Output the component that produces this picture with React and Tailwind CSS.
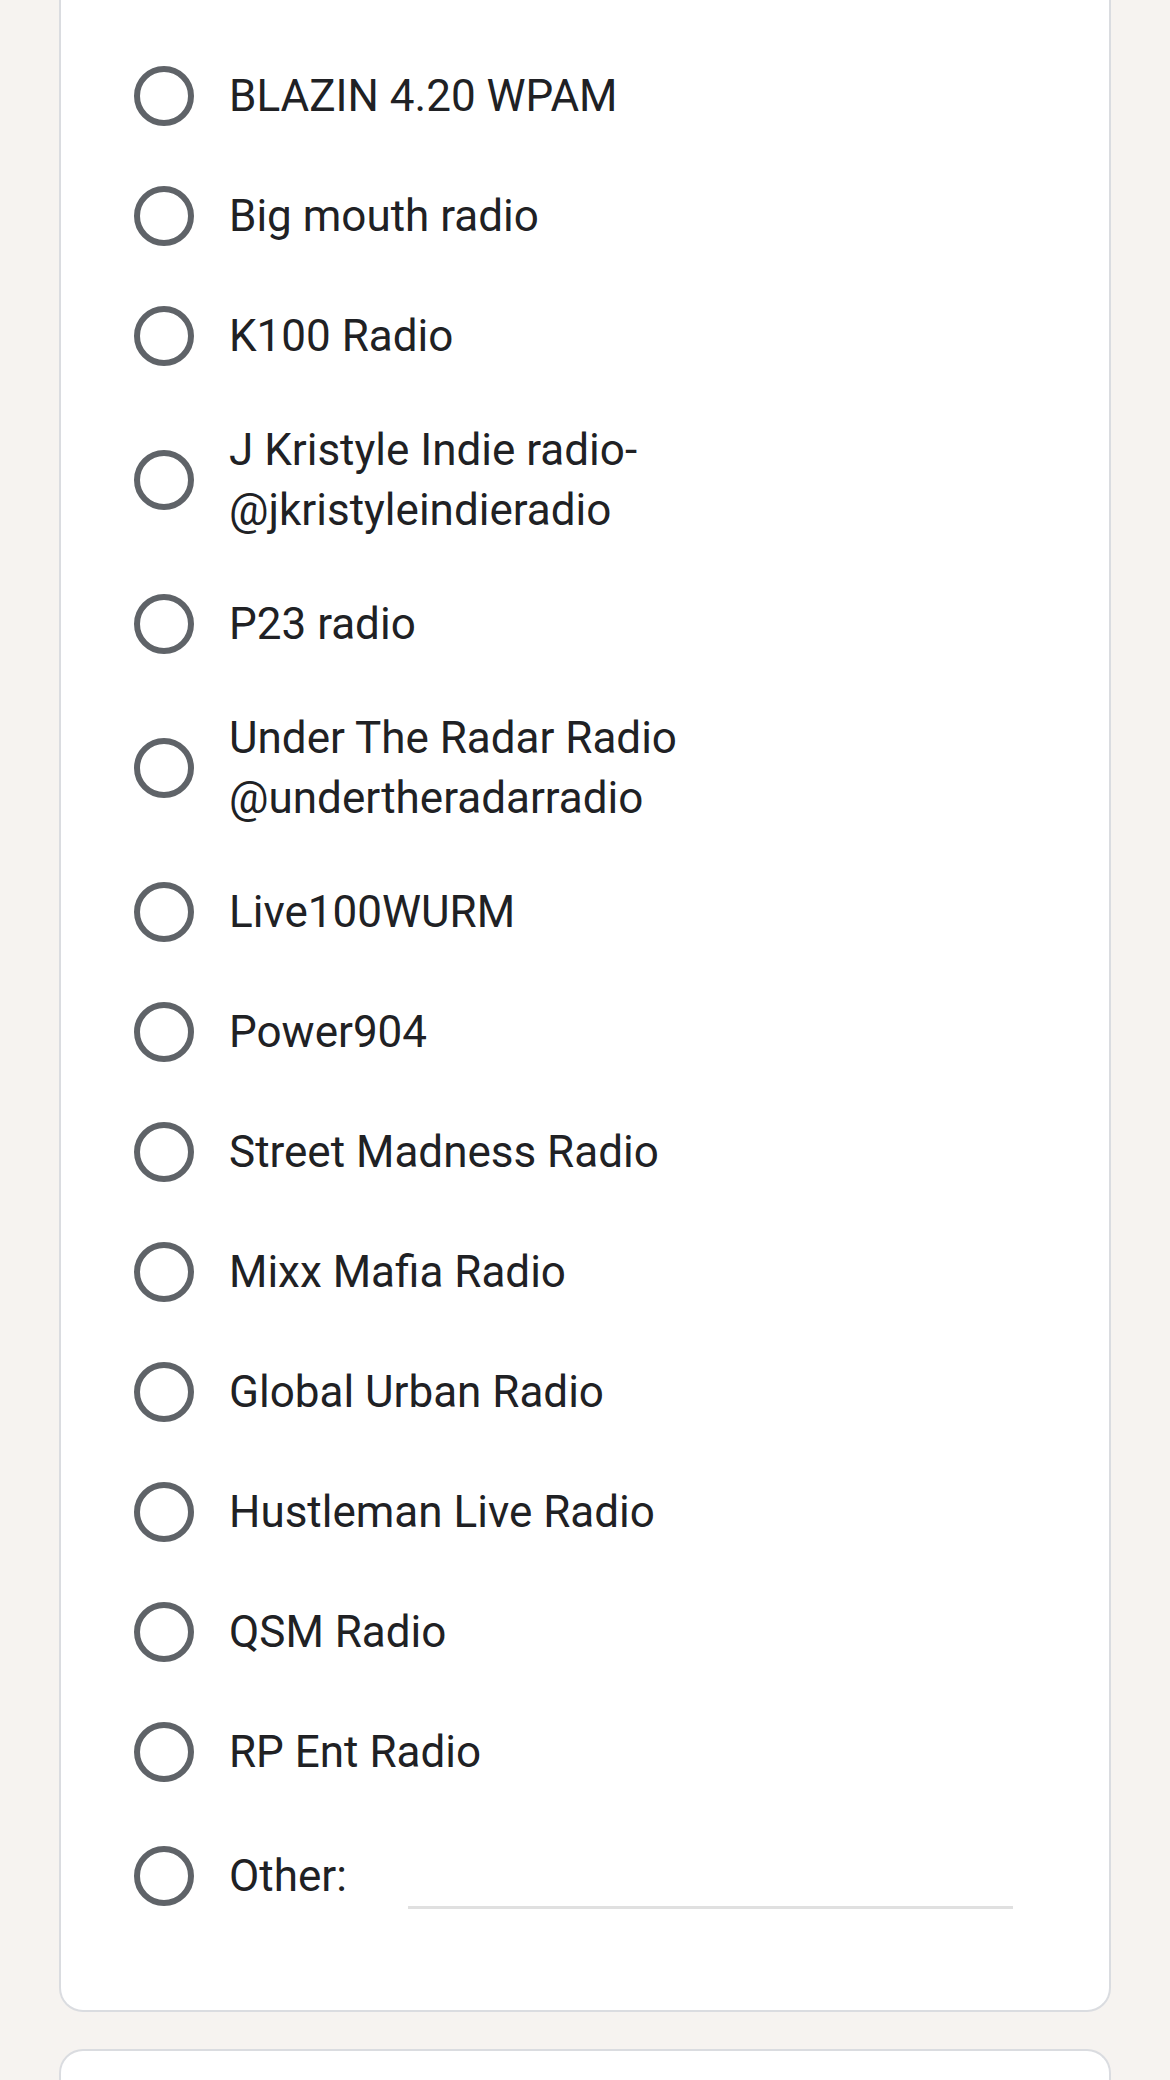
import React from 'react';

const options = [
  ['BLAZIN 4.20 WPAM'],
  ['Big mouth radio'],
  ['K100 Radio'],
  ['J Kristyle Indie radio-', '@jkristyleindieradio'],
  ['P23 radio'],
  ['Under The Radar Radio', '@undertheradarradio'],
  ['Live100WURM'],
  ['Power904'],
  ['Street Madness Radio'],
  ['Mixx Mafia Radio'],
  ['Global Urban Radio'],
  ['Hustleman Live Radio'],
  ['QSM Radio'],
  ['RP Ent Radio'],
];

function Radio() {
  return (
    <div className="flex h-[120px] w-[60px] shrink-0 items-center justify-center">
      <div className="h-[60px] w-[60px] rounded-full border-[6px] border-[#5f6368]" />
    </div>
  );
}

export default function App() {
  return (
    <div
      className="min-h-[2080px] bg-[#f6f3f0] text-[#202124]"
      style={{ fontFamily: 'Roboto, "Noto Sans", sans-serif' }}
    >
      <div className="mx-[59px] rounded-b-[24px] border-2 border-t-0 border-[#dadce0] bg-white pb-[70px] pl-[73px] pr-[96px] pt-[36px]">
        {options.map((lines, idx) => (
          <label key={idx} className="flex items-center">
            <Radio />
            <div className="ml-[35px] py-[24px] text-[44px] leading-[60px]">
              {lines.map((l, i) => (
                <div key={i}>{l}</div>
              ))}
            </div>
          </label>
        ))}
        <label className="flex min-h-[128px] items-center">
          <Radio />
          <div className="ml-[35px] text-[44px] leading-[60px]">Other:</div>
          <div className="ml-[61px] h-[66px] w-[606px] border-b-[3px] border-[#e0e0e0]" />
        </label>
      </div>
      <div className="mx-[59px] mt-[37px] h-[40px] rounded-t-[24px] border-2 border-b-0 border-[#dadce0] bg-white" />
    </div>
  );
}
